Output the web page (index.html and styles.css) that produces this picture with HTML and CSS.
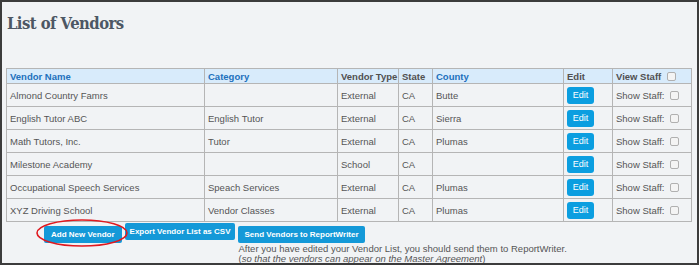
FILE: index.html
```
<!DOCTYPE html>
<html>
<head>
<meta charset="utf-8">
<link rel="stylesheet" href="styles.css">
</head>
<body>
<div class="frame">
  <h1 class="title">List of Vendors</h1>
  <table class="vendors">
    <colgroup>
      <col style="width:198px"><col style="width:133px"><col style="width:61px"><col style="width:34px"><col style="width:131px"><col style="width:49px"><col>
    </colgroup>
    <thead>
      <tr>
        <th class="link">Vendor Name</th>
        <th class="link">Category</th>
        <th>Vendor Type</th>
        <th>State</th>
        <th class="link">County</th>
        <th>Edit</th>
        <th>View Staff <input type="checkbox" class="cb"></th>
      </tr>
    </thead>
    <tbody>
      <tr><td>Almond Country Famrs</td><td></td><td>External</td><td>CA</td><td>Butte</td><td><button class="edit">Edit</button></td><td>Show Staff: <input type="checkbox" class="cb"></td></tr>
      <tr><td>English Tutor ABC</td><td>English Tutor</td><td>External</td><td>CA</td><td>Sierra</td><td><button class="edit">Edit</button></td><td>Show Staff: <input type="checkbox" class="cb"></td></tr>
      <tr><td>Math Tutors, Inc.</td><td>Tutor</td><td>External</td><td>CA</td><td>Plumas</td><td><button class="edit">Edit</button></td><td>Show Staff: <input type="checkbox" class="cb"></td></tr>
      <tr><td>Milestone Academy</td><td></td><td>School</td><td>CA</td><td></td><td><button class="edit">Edit</button></td><td>Show Staff: <input type="checkbox" class="cb"></td></tr>
      <tr><td>Occupational Speech Services</td><td>Speach Services</td><td>External</td><td>CA</td><td>Plumas</td><td><button class="edit">Edit</button></td><td>Show Staff: <input type="checkbox" class="cb"></td></tr>
      <tr><td>XYZ Driving School</td><td>Vendor Classes</td><td>External</td><td>CA</td><td>Plumas</td><td><button class="edit">Edit</button></td><td>Show Staff: <input type="checkbox" class="cb"></td></tr>
    </tbody>
  </table>
  <div class="actions">
    <div class="highlight">
      <button class="btn btn-add">Add New Vendor</button>
      <svg class="ring" width="94" height="30" viewBox="0 0 94 30"><ellipse cx="47" cy="15" rx="45" ry="13" fill="none" stroke="#e0191f" stroke-width="1.6"/></svg>
    </div>
    <button class="btn btn-export">Export Vendor List as CSV</button>
    <div class="send">
      <button class="btn">Send Vendors to ReportWriter</button>
      <p class="note">After you have edited your Vendor List, you should send them to ReportWriter.<br>(<i>so that the vendors can appear on the Master Agreement</i>)</p>
    </div>
  </div>
</div>
</body>
</html>
```
FILE: styles.css
```
* { box-sizing: border-box; }
html, body { margin: 0; padding: 0; background: #ffffff; }
.frame {
  width: 699px;
  height: 265px;
  border: 2px solid #3c3c3c;
  background: #f1f3f5;
  padding: 0 0 0 4px;
  font-family: "Liberation Sans", Arial, sans-serif;
  position: relative;
  overflow: hidden;
}
.title {
  margin: 0;
  padding: 12px 0 0 1px;
  height: 66px;
  font-family: "DejaVu Serif", serif;
  font-size: 16.5px;
  font-weight: bold;
  line-height: 20px;
  color: #4d5764;
  letter-spacing: -0.6px;
  transform: scaleX(0.9);
  transform-origin: left top;
}
.vendors {
  width: 686px;
  border-collapse: collapse;
  table-layout: fixed;
  border: 1px solid #8a8a8a;
  font-size: 9.5px;
  color: #555;
}
.vendors th, .vendors td {
  border: 1px solid #b5b5b5;
  padding: 0 3px;
  text-align: left;
  white-space: nowrap;
  overflow: hidden;
}
.vendors th {
  height: 15px;
  background: #d8ebfb;
  font-weight: bold;
  color: #505050;
}
.vendors th.link { color: #2170bd; }
.vendors td { height: 23px; }
.edit {
  display: block;
  width: 27px;
  height: 17px;
  margin: 0;
  padding: 0;
  border: none;
  border-radius: 3px;
  background: #0b9ee0;
  color: #fff;
  font-family: "Liberation Sans", Arial, sans-serif;
  font-size: 9px;
}
.cb {
  -webkit-appearance: none;
  appearance: none;
  width: 9px;
  height: 9px;
  margin: 0 0 0 3px;
  border: 1px solid #b0b0b0;
  border-radius: 2px;
  background: #f4f4f4;
  vertical-align: -1px;
}
.actions {
  display: flex;
  align-items: flex-start;
  gap: 3px;
  margin: 1px 0 0 38px;
}
.highlight { position: relative; }
.ring {
  position: absolute;
  left: -9px;
  top: -5px;
  pointer-events: none;
}
.btn {
  height: 17px;
  margin: 0;
  padding: 0 6px;
  border: none;
  border-radius: 2px;
  background: #1499d8;
  color: #fff;
  font-family: "Liberation Sans", Arial, sans-serif;
  font-size: 8px;
  font-weight: bold;
  white-space: nowrap;
}
.btn-add { padding: 0 7px; }
.btn-export { padding: 0 5px; }
.note {
  margin: 1px 0 0 0;
  font-size: 9.5px;
  line-height: 10px;
  color: #555;
  white-space: nowrap;
}
```
